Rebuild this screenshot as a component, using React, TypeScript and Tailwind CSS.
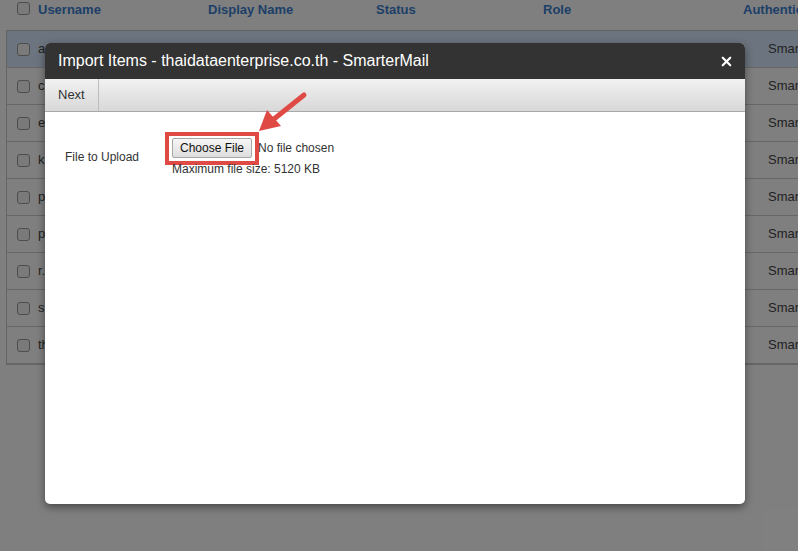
import { X } from "lucide-react";

const ROWS = ["a", "c", "e", "k", "p", "p", "r.", "s", "th"];

function Box() {
  return <span className="block h-[13px] w-[13px] shrink-0 rounded-[3px] border border-[#9a9a9a] bg-[#f4f4f4]" />;
}

export default function App() {
  return (
    <div className="relative h-[551px] w-[798px] overflow-hidden bg-white font-['Liberation_Sans',Arial,sans-serif] text-[13px] text-[#444]">
      {/* page behind the dialog */}
      <div className="flex h-[30px] items-start pt-[2px] pl-[17px]">
        <Box />
        <div className="flex font-bold leading-[15px] text-[#3b7fd0] whitespace-nowrap">
          <span className="ml-[8px] w-[170px] shrink-0">Username</span>
          <span className="w-[168px] shrink-0">Display Name</span>
          <span className="w-[167px] shrink-0">Status</span>
          <span className="w-[200px] shrink-0">Role</span>
          <span>Authentication</span>
        </div>
      </div>
      <div className="ml-[6px] w-[820px] border border-[#c8c8c8]">
        {ROWS.map((r, i) => (
          <div
            key={i}
            className={`flex h-[37px] items-center border-b border-[#cfcfcf] pl-[10px] ${i === 0 ? "bg-[#d8ebff]" : "bg-white"}`}
          >
            <Box />
            <span className="ml-[8px] w-[730px] shrink-0">{r}</span>
            <span className="whitespace-nowrap">SmarterMail</span>
          </div>
        ))}
      </div>

      {/* overlay */}
      <div className="absolute inset-0 bg-black/50" />

      {/* dialog */}
      <div className="absolute left-[45px] top-[43px] flex h-[461px] w-[700px] flex-col overflow-hidden rounded-[5px] bg-white shadow-[0_3px_8px_rgba(0,0,0,0.45)]">
        <div className="flex h-[36px] shrink-0 items-center justify-between bg-[#333333] pl-[13px] pr-[11px] text-white">
          <span className="text-[16px]">Import Items - thaidataenterprise.co.th - SmarterMail</span>
          <X className="h-[15px] w-[15px]" strokeWidth={3.5} />
        </div>
        <div className="flex h-[33px] shrink-0 border-b border-[#a8a8a8] bg-gradient-to-b from-[#f1f1f1] to-[#d8d8d8]">
          <span className="flex items-center border-r border-[#bdbdbd] px-[13px] text-[13px] text-[#333]">Next</span>
        </div>
        <div className="flex pl-[20px] pt-[20px] text-[12px] text-[#333]">
          <span className="mt-[16px] w-[100px]">File to Upload</span>
          <div className="flex flex-col">
            <div className="flex items-center">
              <div className="border-[4px] border-[#e04a45] px-[3px] pt-[2px] pb-[3px]">
                <button className="flex h-[20px] items-center rounded-[2px] border border-[#a6a6a6] bg-gradient-to-b from-[#f6f6f6] to-[#dedede] px-[7px] text-[12px] leading-[14px] text-[#111]">
                  Choose File
                </button>
              </div>
              <span className="ml-[-1px] mb-[2px]">No file chosen</span>
            </div>
            <span className="ml-[7px] mt-[-3px] leading-[14px]">Maximum file size: 5120 KB</span>
          </div>
        </div>
      </div>

      {/* annotation arrow */}
      <svg className="absolute left-0 top-0" width="798" height="551">
        <line x1="304" y1="95" x2="274" y2="119" stroke="#e04a45" strokeWidth="5" strokeLinecap="round" />
        <polygon points="259,131 267,110 281,126" fill="#e04a45" />
      </svg>
    </div>
  );
}
